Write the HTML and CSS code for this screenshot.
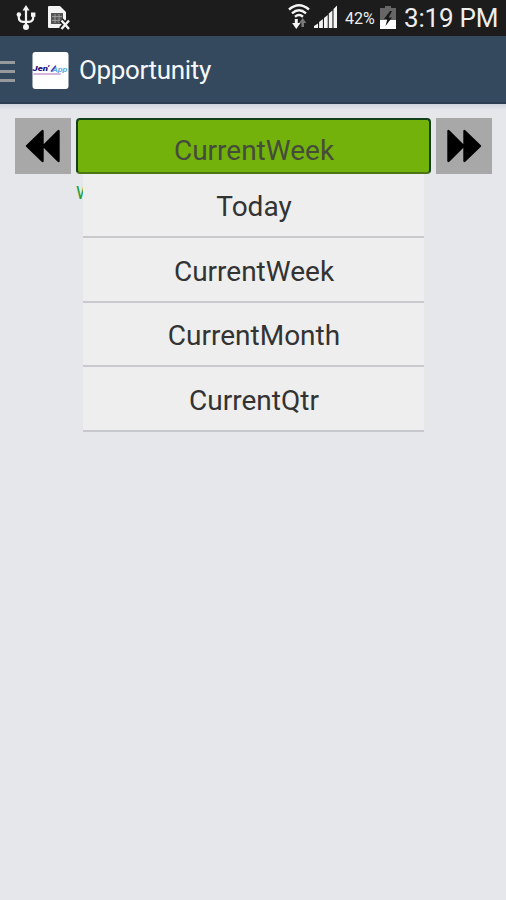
FILE: index.html
```html
<!DOCTYPE html>
<html lang="en">
<head>
<meta charset="utf-8">
<title>Opportunity</title>
<link rel="stylesheet" href="styles.css">
</head>
<body>
<div class="screen">
  <div class="status">
    <svg class="usb" width="20" height="26" viewBox="0 0 20 26" fill="none" stroke="#f4f4f4" stroke-width="2.2">
      <path d="M10 4V23M2.8 9V12.5Q2.8 16.5 7 16.8H13Q17.2 16.5 17.2 12.5V9"/>
      <path d="M10 0L13.5 5.5H6.5Z" fill="#f4f4f4" stroke="none"/>
      <circle cx="10" cy="22" r="3" fill="#f4f4f4" stroke="none"/>
      <circle cx="2.9" cy="9.5" r="2.3" fill="#f4f4f4" stroke="none"/>
      <path d="M15 7.5H19.4V11.8H15Z" fill="#f4f4f4" stroke="none"/>
    </svg>
    <svg class="sim" width="24" height="26" viewBox="0 0 24 26">
      <path d="M2 1H13L19 7V23H2Q1 23 1 22V2Q1 1 2 1Z" fill="#f4f4f4"/>
      <path d="M4 8H16V19H4Z" fill="#555"/>
      <path d="M5 11.6H15M5 15.4H15M8 9V18M12 9V18" stroke="#aaa" stroke-width=".8"/>
      <path d="M14 15L22 24M22 15L14 24" stroke="#1b1b1b" stroke-width="5"/>
      <path d="M14.5 15.5L22 24M22 15.5L14.5 24" stroke="#f4f4f4" stroke-width="2.4"/>
    </svg>
    <div class="status-right">
      <svg class="wifi" width="22" height="26" viewBox="0 0 22 26" fill="none" stroke="#f4f4f4" stroke-width="2.4">
        <path d="M1 5.5Q11-3 21 5.5M4 9.3Q11 3.2 18 9.3M7 12.7Q11 9.5 15 12.7"/>
        <path d="M8.3 15V20" stroke-width="3"/>
        <path d="M4.1 19H12.5L8.3 25Z" fill="#f4f4f4" stroke="none"/>
        <path d="M14.7 17V23" stroke="#777" stroke-width="2.6"/>
        <path d="M11 19L14.7 14L18.4 19Z" fill="#777" stroke="none"/>
      </svg>
      <svg class="signal" width="24" height="24" viewBox="0 0 24 24" fill="#f4f4f4">
        <path d="M0 23V21L4 18.5V23ZM5.1 23V17L8.9 14V23ZM10 23V13L13.7 10V23ZM14.8 23V8.5L18.4 5.5V23ZM19.5 23V4L23 .5V23Z"/>
      </svg>
      <span class="percent">42%</span>
      <svg class="battery" width="16" height="24" viewBox="0 0 16 24">
        <path d="M0 2H5V0H11V2H16V23H0Z" fill="#666"/>
        <path d="M0 14H16V23H0Z" fill="#fff"/>
        <path d="M10 5L4 13H7.3L5.5 20L12 11.5H8.7L12 5Z" fill="#181818"/>
      </svg>
      <span class="clock">3:19 PM</span>
    </div>
  </div>

  <header class="appbar">
    <div class="menu"><i></i><i></i><i></i></div>
    <svg class="logo" width="37" height="37" viewBox="0 0 37 38">
      <rect width="37" height="38" rx="3" fill="#fff"/>
      <text class="logo-dark" x="0" y="20" textLength="17" lengthAdjust="spacingAndGlyphs">Jen'</text>
      <text class="logo-blue" x="20" y="21" textLength="16" lengthAdjust="spacingAndGlyphs">App</text>
      <path d="M1 22.6H29" stroke="#b782bf" stroke-width="1.2"/>
      <path d="M19 20L24 14" stroke="#4936a4" stroke-width="1.5"/>
    </svg>
    <h1 class="title">Opportunity</h1>
  </header>

  <main>
    <div class="picker">
      <div class="step">
        <svg width="56" height="56" viewBox="0 0 56 56"><path d="M12 28L27.5 13V43ZM28.5 28L43.5 13V43Z" stroke="#000" stroke-width="2.4" stroke-linejoin="round"/></svg>
      </div>
      <div class="field"><span class="label">CurrentWeek</span></div>
      <div class="step">
        <svg width="56" height="56" viewBox="0 0 56 56"><path d="M12.5 13L27.5 28L12.5 43ZM28.5 13L44 28L28.5 43Z" stroke="#000" stroke-width="2.4" stroke-linejoin="round"/></svg>
      </div>
    </div>
    <div class="below">
      <div class="hint">W</div>
      <div class="options">
        <div class="option"><span class="label">Today</span></div>
        <div class="option"><span class="label">CurrentWeek</span></div>
        <div class="option"><span class="label">CurrentMonth</span></div>
        <div class="option"><span class="label">CurrentQtr</span></div>
      </div>
    </div>
  </main>
</div>
</body>
</html>
```

FILE: styles.css
```css
* { box-sizing: border-box; }
body { margin: 0; font-family: Roboto, "Noto Sans", sans-serif; }
.screen { width: 506px; height: 900px; background: #e5e7eb; overflow: hidden; }

.status { display: flex; height: 36px; padding: 0 8px 0 16px; background: #1c1c1c; color: #eee; }
.usb { margin-top: 5px; }
.sim { margin: 5px 0 0 11px; }
.status-right { display: flex; margin-left: auto; }
.wifi { margin-top: 4px; }
.signal { margin: 5px 0 0 4px; }
.percent { width: 31px; margin-left: 7px; font-size: 16px; line-height: 38px; white-space: nowrap; }
.battery { margin: 6px 0 0 4px; }
.clock { width: 94px; margin-left: 8px; font-size: 26px; letter-spacing: -0.2px; line-height: 37px; white-space: nowrap; }

.appbar { display: flex; align-items: center; height: 68px; background: #34495e; border-bottom: 2px solid #2c3e52; }
.menu { display: flex; flex-direction: column; gap: 6px; width: 15px; margin-top: 4px; }
.menu i { height: 3px; background: #98999d; }
.logo { margin: 2px 0 0 17px; }
.logo-dark { font: italic 900 7px Roboto, sans-serif; fill: #20127a; }
.logo-blue { font: italic 700 8px Roboto, sans-serif; fill: #5eaee6; }
.title { margin: 2px 0 0 10px; color: #f6f8fa; font-size: 26px; font-weight: 400; letter-spacing: -0.35px; line-height: 34px; }

.picker { display: flex; padding: 14px 13px 0 15px; background: linear-gradient(#cfd5de, #e5e7eb 6px); }
.step { width: 56px; height: 56px; background: #a8a8a8; }
.step svg { display: block; }
.field { display: flex; justify-content: center; width: 355px; height: 56px; margin: 0 5px; padding: 14px 0 0 1px; background: #72b20b; border: 2px solid #12401a; border-bottom-color: #4c7515; border-radius: 4px; }
.field .label { color: #454c3c; }
.below { display: flex; padding-left: 76px; }
.hint { width: 7px; height: 34px; padding-top: 8px; overflow: hidden; color: #22a038; font-size: 18px; line-height: 22px; }
.options { display: grid; grid-template-rows: 64px 65px 64px 65px; width: 341px; }
.option { display: flex; justify-content: center; align-items: flex-end; padding: 0 0 12px 1px; background: #eee; border-bottom: 2px solid #c8c9cc; }
.label { color: #333; font-size: 28px; font-weight: 400; line-height: 34px; white-space: nowrap; }
```
